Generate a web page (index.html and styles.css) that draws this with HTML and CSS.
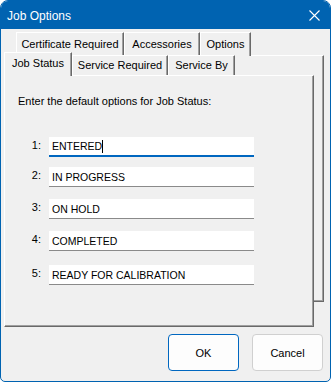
FILE: index.html
```html
<!DOCTYPE html>
<html lang="en">
<head>
    <meta charset="UTF-8">
    <title>Job Options</title>
    <link rel="stylesheet" href="styles.css">
</head>
<body>
    <div class="window">
        <div class="titlebar">
            <span class="title">Job Options</span>
            <svg class="close" width="11" height="11" viewBox="0 0 11 11">
                <path d="M0.5 0.5 L10.5 10.5 M10.5 0.5 L0.5 10.5" stroke="#fff" stroke-width="1.1" fill="none"/>
            </svg>
        </div>

        <div class="content">
            <div class="tab-row row-back">
                <div class="tab tab-cert">Certificate Required</div>
                <div class="tab tab-acc">Accessories</div>
                <div class="tab tab-opt">Options</div>
            </div>

            <div class="stack">
                <div class="sheet-back"></div>
                <div class="front">
                    <div class="tab-row row-front">
                        <div class="tab tab-status selected">Job Status</div>
                        <div class="tab tab-req">Service Required</div>
                        <div class="tab tab-by">Service By</div>
                    </div>
                    <div class="panel">
                        <p class="intro">Enter the default options for Job Status:</p>
                        <div class="options">
                            <div class="option">
                                <span class="num">1:</span>
                                <div class="field focused">ENTERED<span class="caret"></span></div>
                            </div>
                            <div class="option">
                                <span class="num">2:</span>
                                <div class="field">IN PROGRESS</div>
                            </div>
                            <div class="option">
                                <span class="num">3:</span>
                                <div class="field">ON HOLD</div>
                            </div>
                            <div class="option">
                                <span class="num">4:</span>
                                <div class="field">COMPLETED</div>
                            </div>
                            <div class="option">
                                <span class="num">5:</span>
                                <div class="field">READY FOR CALIBRATION</div>
                            </div>
                        </div>
                    </div>
                </div>
            </div>

            <div class="buttons">
                <button class="btn btn-default">OK</button>
                <button class="btn">Cancel</button>
            </div>
        </div>
    </div>
</body>
</html>
```

FILE: styles.css
```css
body {
    margin: 0;
    font-family: "Liberation Sans", Arial, sans-serif;
    font-size: 11px;
    color: #000;
    background-color: #fff;
}
.window {
    width: 331px;
    height: 382px;
    box-sizing: border-box;
    border: 1px solid #0063b1;
    border-radius: 8px 8px 5px 5px;
    background-color: #f0f0f0;
    overflow: hidden;
}
.titlebar {
    height: 28px;
    background-color: #0063b1;
    color: #fff;
    display: flex;
    align-items: center;
    justify-content: space-between;
    padding: 0 10px 0 6px;
}
.title {
    font-size: 12px;
    margin-top: 1px;
}
.close {
    display: block;
    margin-top: 1px;
}
.content {
    padding: 4px 0 0 3px;
}

/* tabs */
.tab-row {
    display: flex;
    align-items: flex-end;
    position: relative;
    z-index: 1;
}
.row-back {
    padding-left: 12px;
    height: 23px;
    margin-bottom: -1px;
}
.row-front {
    height: 20px;
}
.tab {
    box-sizing: border-box;
    height: 100%;
    border-top: 1px solid #fff;
    border-left: 1px solid #fff;
    border-right: 1px solid #696969;
    box-shadow: inset -1px 0 0 #a0a0a0;
    background-color: #f0f0f0;
    display: flex;
    align-items: center;
    justify-content: center;
    white-space: nowrap;
}
.row-back .tab {
    height: 24px;
    padding-bottom: 2px;
}
.tab-cert { width: 108px; }
.tab-acc { width: 76px; }
.tab-opt { width: 51px; }
.tab-status { width: 68px; }
.tab-req { width: 96px; }
.tab-by { width: 67px; }
.row-front .tab {
    padding-bottom: 1px;
}
.row-front .tab.selected {
    height: 24px;
    margin-bottom: -1px;
    padding-bottom: 3px;
}

/* stacked sheets */
.stack {
    display: grid;
    width: 320px;
}
.sheet-back,
.front {
    grid-area: 1 / 1;
}
.sheet-back {
    margin: 0 0 25px 12px;
    border-top: 1px solid #fff;
    border-right: 1px solid #696969;
    border-bottom: 1px solid #696969;
    box-shadow: inset -1px -1px 0 #a0a0a0;
}
.front {
    margin-right: 10px;
}
.panel {
    box-sizing: border-box;
    height: 252px;
    border-top: 1px solid #fff;
    border-left: 1px solid #fff;
    border-right: 1px solid #696969;
    border-bottom: 1px solid #696969;
    box-shadow: inset -1px -1px 0 #a0a0a0;
    background-color: #f0f0f0;
    padding: 18px 0 0 13px;
}
.intro {
    margin: 0;
    line-height: 14px;
}
.options {
    margin-top: 29px;
    display: flex;
    flex-direction: column;
}
.option {
    display: flex;
    align-items: flex-start;
    gap: 8px;
    margin-top: 12px;
}
.option:first-child { margin-top: 0; }
.option:nth-child(2) { margin-top: 10px; }
.option:last-child { margin-top: 14px; }
.num {
    width: 23px;
    text-align: right;
    line-height: 16px;
}
.field {
    box-sizing: border-box;
    width: 205px;
    height: 20px;
    background-color: #fff;
    border-bottom: 1px solid #8a8a8a;
    padding: 1px 0 0 3px;
    font-size: 10.5px;
    line-height: 17px;
    display: flex;
    align-items: center;
}
.field.focused {
    border-bottom: 2px solid #0067c0;
}
.caret {
    display: inline-block;
    width: 1px;
    height: 13px;
    background-color: #000;
}

/* buttons */
.buttons {
    display: flex;
    justify-content: flex-end;
    gap: 13px;
    padding-right: 7px;
    margin-top: 7px;
}
.btn {
    width: 71px;
    height: 37px;
    border: 1px solid #d0d0d0;
    border-radius: 4px;
    background-color: #fdfdfd;
    font-family: "Liberation Sans", Arial, sans-serif;
    font-size: 11px;
    color: #000;
    padding: 0;
}
.btn-default {
    border-color: #0067c0;
}
```
